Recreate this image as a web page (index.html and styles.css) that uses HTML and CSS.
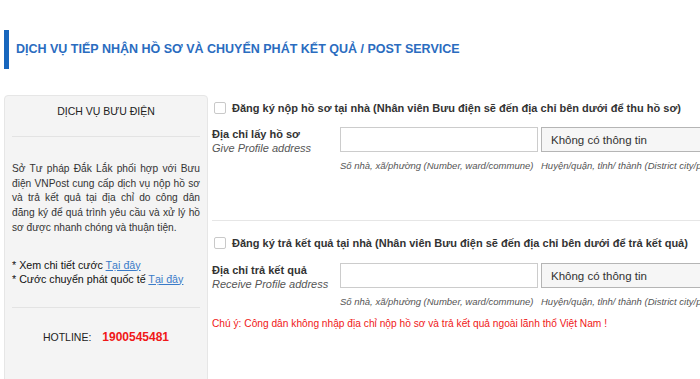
FILE: index.html
```html
<!DOCTYPE html>
<html lang="vi">
<head>
  <meta charset="UTF-8" />
  <meta name="viewport" content="width=device-width, initial-scale=1.0" />
  <title>Dịch vụ bưu điện</title>
  <link rel="stylesheet" href="styles.css">
</head>
<body>
  <div class="page">
    <h2 class="section-title">DỊCH VỤ TIẾP NHẬN HỒ SƠ VÀ CHUYỂN PHÁT KẾT QUẢ / POST SERVICE</h2>

    <div class="row">
      <aside class="post-box">
        <div class="post-box-title">DỊCH VỤ BƯU ĐIỆN</div>
        <hr>
        <p class="post-desc">Sở Tư pháp Đắk Lắk phối hợp với Bưu điện VNPost cung cấp dịch vụ nộp hồ sơ và trả kết quả tại địa chỉ do công dân đăng ký để quá trình yêu cầu và xử lý hồ sơ được nhanh chóng và thuận tiện.</p>
        <div class="post-links">
          <div>* Xem chi tiết cước <a href="#">Tại đây</a></div>
          <div>* Cước chuyển phát quốc tế <a href="#">Tại đây</a></div>
        </div>
        <hr>
        <div class="hotline">HOTLINE: <span>1900545481</span></div>
      </aside>

      <main class="post-form">
        <div class="form-block">
          <label class="check-row"><input type="checkbox"> Đăng ký nộp hồ sơ tại nhà (Nhân viên Bưu điện sẽ đến địa chỉ bên dưới để thu hồ sơ)</label>
          <div class="field-row">
            <div class="field-label">
              <b>Địa chỉ lấy hồ sơ</b>
              <i>Give Profile address</i>
            </div>
            <div class="field-col">
              <input type="text" class="text-input">
              <span class="hint">Số nhà, xã/phường (Number, ward/commune)</span>
            </div>
            <div class="field-col">
              <select class="select-input"><option>Không có thông tin</option></select>
              <span class="hint">Huyện/quận, tỉnh/ thành (District city/province)</span>
            </div>
          </div>
        </div>

        <div class="form-block second">
          <label class="check-row"><input type="checkbox"> Đăng ký trả kết quả tại nhà (Nhân viên Bưu điện sẽ đến địa chỉ bên dưới để trả kết quả)</label>
          <div class="field-row">
            <div class="field-label">
              <b>Địa chỉ trả kết quả</b>
              <i>Receive Profile address</i>
            </div>
            <div class="field-col">
              <input type="text" class="text-input">
              <span class="hint">Số nhà, xã/phường (Number, ward/commune)</span>
            </div>
            <div class="field-col">
              <select class="select-input"><option>Không có thông tin</option></select>
              <span class="hint">Huyện/quận, tỉnh/ thành (District city/province)</span>
            </div>
          </div>
          <p class="note">Chú ý: Công dân không nhập địa chỉ nộp hồ sơ và trả kết quả ngoài lãnh thổ Việt Nam !</p>
        </div>
      </main>
    </div>
  </div>
</body>
</html>
```

FILE: styles.css
```css
* {
  box-sizing: border-box;
}
html, body {
  overflow: hidden;
}
body {
  margin: 0;
  font-family: "Liberation Sans", Arial, sans-serif;
  font-size: 11px;
  color: #333;
  background: #fff;
}
.page {
  width: 760px;
  padding: 30px 0 0 4px;
}
.section-title {
  margin: 0;
  border-left: 5px solid #1766bd;
  padding: 10px 7px;
  height: 39px;
  font-size: 12.5px;
  font-weight: bold;
  color: #2a6cbf;
  line-height: 19px;
}
.row {
  display: flex;
  gap: 4px;
  margin-top: 26px;
}
.post-box {
  width: 204px;
  flex: none;
  background: #f4f4f4;
  border: 1px solid #e6e6e6;
  border-radius: 4px;
  padding: 0 7px 60px;
  min-height: 300px;
}
.post-box hr {
  border: 0;
  border-top: 1px solid #e3e3e3;
  margin: 0;
}
.post-box-title {
  text-align: center;
  font-size: 10.5px;
  padding: 8px 0 18px;
  line-height: 14px;
  color: #222;
}
.post-desc {
  margin: 25px 0 0;
  font-size: 10.2px;
  line-height: 14.7px;
  text-align: justify;
}
.post-links {
  margin: 22px 0 21px;
  line-height: 14px;
  font-size: 10.7px;
  color: #111;
}
.post-links a {
  color: #3a7bc8;
}
.hotline {
  text-align: center;
  padding: 21px 0 0;
  font-size: 10.5px;
  line-height: 16px;
  color: #222;
}
.hotline span {
  color: #f01818;
  font-weight: bold;
  font-size: 12px;
  margin-left: 8px;
}
.post-form {
  flex: 1;
}
.form-block {
  padding-top: 5px;
}
.form-block.second {
  border-top: 1px solid #e6e6e6;
  margin-top: 48px;
  padding-top: 14px;
}
.check-row {
  display: flex;
  align-items: center;
  gap: 6px;
  font-weight: bold;
  color: #333;
  line-height: 16px;
}
.check-row input {
  appearance: none;
  margin: 0 0 0 2px;
  width: 12px;
  height: 12px;
  border: 1px solid #c9c9c9;
  border-radius: 2px;
  background: #fff;
}
.field-row {
  display: flex;
  margin-top: 11px;
}
.second .field-row {
  margin-top: 12px;
}
.field-label {
  width: 128px;
  flex: none;
  display: flex;
  flex-direction: column;
  line-height: 14px;
  font-size: 11px;
}
.field-label b {
  color: #333;
}
.field-label i {
  color: #555;
}
.field-col {
  display: flex;
  flex-direction: column;
  margin-right: 3px;
}
.text-input {
  width: 198px;
  height: 25px;
  border: 1px solid #ccc;
  margin: 0;
}
.select-input {
  width: 200px;
  height: 25px;
  border: 1px solid #b5b5b5;
  border-radius: 0;
  background: #f6f6f6;
  font-family: inherit;
  font-size: 11.5px;
  color: #333;
  padding-left: 5px;
  margin: 0;
}
.hint {
  font-style: italic;
  font-size: 9.5px;
  line-height: 12px;
  color: #555;
  margin-top: 8px;
  white-space: nowrap;
}
.note {
  color: #f01818;
  margin: 9px 0 0;
  font-size: 10.2px;
  line-height: 14px;
}
```
